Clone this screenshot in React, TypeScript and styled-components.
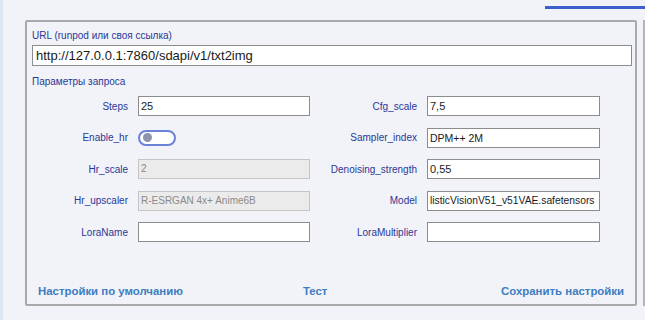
import React from 'react';
import styled, { createGlobalStyle } from 'styled-components';

const GlobalStyle = createGlobalStyle`
  html, body {
    margin: 0;
    padding: 0;
    background: #f1f3f8;
    font-family: 'Liberation Sans', Arial, sans-serif;
  }
  * { box-sizing: border-box; }
`;

const Page = styled.div`
  width: 645px;
  height: 320px;
  overflow: hidden;
  display: flex;
  flex-direction: column;
  background: #f1f3f8;
  border-left: 3px solid #dde6f4;
`;

const TopBar = styled.div`
  height: 20px;
  display: flex;
  justify-content: flex-end;
  padding-top: 6px;
`;

const TabLine = styled.div`
  width: 100px;
  height: 3px;
  background: #3b5fcb;
`;

const Body = styled.div`
  display: flex;
  gap: 6px;
  padding-left: 22px;
`;

const Panel = styled.div`
  width: 612px;
  flex-shrink: 0;
  height: 286px;
  border: 2px solid #a9a9a9;
  border-radius: 2px;
  padding: 7px 3px 6px 5px;
  display: flex;
  flex-direction: column;
`;

const SidePanel = styled.div`
  flex: 1;
  height: 286px;
  border: 2px solid #b4b4b4;
  border-right: none;
`;

const Caption = styled.div`
  font-size: 10px;
  line-height: 14px;
  color: #2c3796;
  white-space: nowrap;
`;

const Section = styled(Caption)`
  margin-top: 9px;
`;

const Input = styled.div<{ $disabled?: boolean; $size?: number }>`
  height: 20px;
  border: 1px solid ${(p) => (p.$disabled ? '#c4c4c4' : '#8c8c8c')};
  background: ${(p) => (p.$disabled ? '#ebebeb' : '#ffffff')};
  color: ${(p) => (p.$disabled ? '#8a8a8a' : '#1a1a1a')};
  font-size: ${(p) => p.$size ?? 11}px;
  line-height: 18px;
  padding: 0 2px;
  white-space: nowrap;
  overflow: hidden;
`;

const UrlInput = styled(Input)`
  margin-top: 2px;
  height: 21px;
  line-height: 19px;
  padding: 0 3px;
`;

const Grid = styled.div`
  margin-top: 7px;
  display: grid;
  grid-template-columns: 278px 290px;
  row-gap: 11.5px;
`;

const Field = styled.div<{ $labelWidth: number }>`
  display: grid;
  grid-template-columns: ${(p) => p.$labelWidth}px 1fr;
  column-gap: 10px;
  align-items: center;
  height: 20px;
`;

const Label = styled.div`
  text-align: right;
  font-size: 10px;
  color: #2c3796;
  white-space: nowrap;
`;

const Toggle = styled.div`
  width: 38px;
  height: 16px;
  border: 2px solid #6b82d9;
  border-radius: 8px;
  background: #ffffff;
  display: flex;
  align-items: center;
  padding-left: 3px;
`;

const Knob = styled.div`
  width: 9px;
  height: 9px;
  border-radius: 50%;
  background: #8d93ad;
`;

const Footer = styled.div`
  margin-top: auto;
  display: flex;
  align-items: center;
  padding: 0 8px 0 6px;
`;

const LinkButton = styled.span<{ $push?: string }>`
  font-size: 11.4px;
  line-height: 14px;
  font-weight: bold;
  color: #3e7dc0;
  white-space: nowrap;
  margin-left: ${(p) => p.$push ?? '0'};
  cursor: pointer;
`;

type Row = {
  label: string;
  value?: string;
  disabled?: boolean;
  toggle?: boolean;
  size?: number;
};

const leftRows: Row[] = [
  { label: 'Steps', value: '25' },
  { label: 'Enable_hr', toggle: true },
  { label: 'Hr_scale', value: '2', disabled: true, size: 10 },
  { label: 'Hr_upscaler', value: 'R-ESRGAN 4x+ Anime6B', disabled: true, size: 10 },
  { label: 'LoraName', value: '' },
];

const rightRows: Row[] = [
  { label: 'Cfg_scale', value: '7,5' },
  { label: 'Sampler_index', value: 'DPM++ 2M', size: 10.5 },
  { label: 'Denoising_strength', value: '0,55' },
  { label: 'Model', value: 'listicVisionV51_v51VAE.safetensors', size: 10.3 },
  { label: 'LoraMultiplier', value: '' },
];

const renderField = (row: Row, labelWidth: number) => (
  <Field key={row.label} $labelWidth={labelWidth}>
    <Label>{row.label}</Label>
    {row.toggle ? (
      <Toggle>
        <Knob />
      </Toggle>
    ) : (
      <Input $disabled={row.disabled} $size={row.size}>
        {row.value}
      </Input>
    )}
  </Field>
);

const App: React.FC = () => {
  return (
    <>
      <GlobalStyle />
      <Page>
        <TopBar>
          <TabLine />
        </TopBar>
        <Body>
          <Panel>
            <Caption>URL (runpod или своя ссылка)</Caption>
            <UrlInput $size={13}>http://127.0.0.1:7860/sdapi/v1/txt2img</UrlInput>
            <Section>Параметры запроса</Section>
            <Grid>
              {leftRows.map((row, i) => (
                <React.Fragment key={row.label}>
                  {renderField(row, 96)}
                  {renderField(rightRows[i], 107)}
                </React.Fragment>
              ))}
            </Grid>
            <Footer>
              <LinkButton>Настройки по умолчанию</LinkButton>
              <LinkButton $push="120px">Тест</LinkButton>
              <LinkButton $push="auto">Сохранить настройки</LinkButton>
            </Footer>
          </Panel>
          <SidePanel />
        </Body>
      </Page>
    </>
  );
};

export default App;
